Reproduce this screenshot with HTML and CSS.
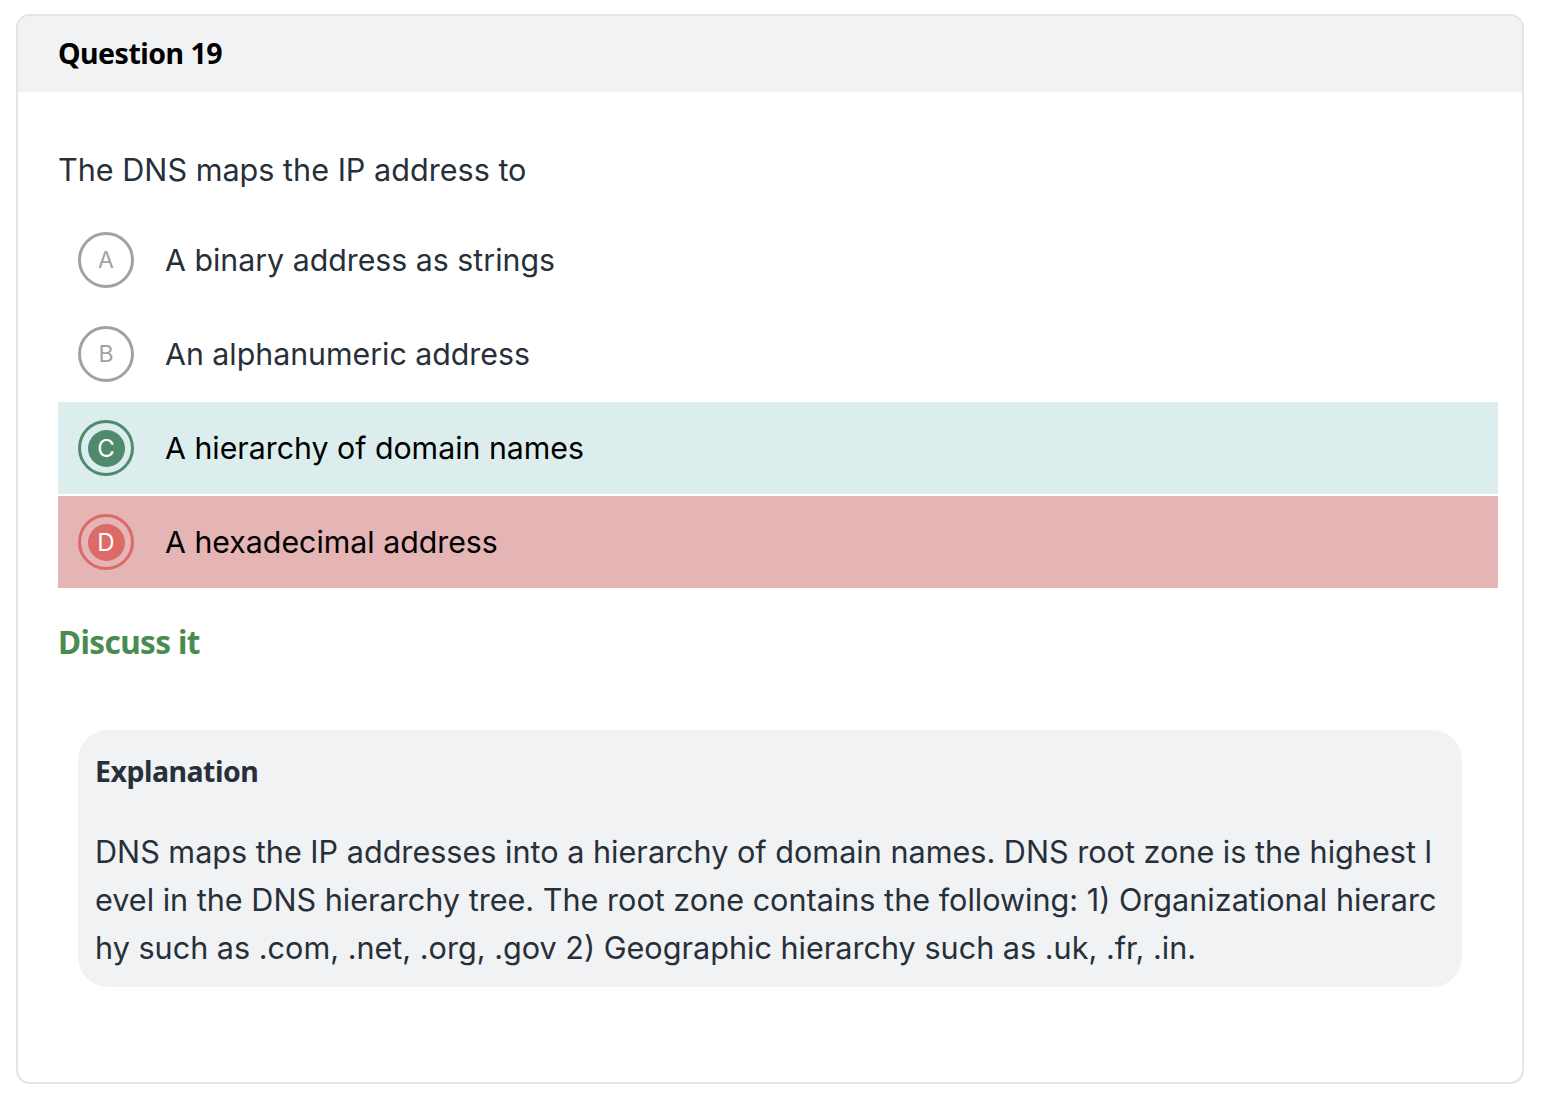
FILE: index.html
```html
<!DOCTYPE html>
<html lang="en">
<head>
<meta charset="utf-8">
<title>Question 19</title>
<link rel="stylesheet" href="styles.css">
</head>
<body>
<div class="card">
  <div class="card-header">Question 19</div>
  <div class="card-body">
    <p class="question">The DNS maps the IP address to</p>
    <ul class="options">
      <li class="option"><span class="badge">A</span><span class="opt-text">A binary address as strings</span></li>
      <li class="option"><span class="badge">B</span><span class="opt-text">An alphanumeric address</span></li>
      <li class="option correct"><span class="badge"><span class="dot">C</span></span><span class="opt-text">A hierarchy of domain names</span></li>
      <li class="option wrong"><span class="badge"><span class="dot">D</span></span><span class="opt-text">A hexadecimal address</span></li>
    </ul>
    <a class="discuss" href="#">Discuss it</a>
    <div class="explanation">
      <div class="exp-title">Explanation</div>
      <p class="exp-text">DNS maps the IP addresses into a hierarchy of domain names. DNS root zone is the highest level in the DNS hierarchy tree. The root zone contains the following: 1) Organizational hierarchy such as .com, .net, .org, .gov 2) Geographic hierarchy such as .uk, .fr, .in.</p>
    </div>
  </div>
</div>
</body>
</html>
```
FILE: styles.css
```css
* { box-sizing: border-box; }
body {
  margin: 0;
  padding: 14px 34px 0 16px;
  background: #fff;
  font-family: Inter, "Noto Sans", sans-serif;
  color: #27303a;
}
.card {
  border: 2px solid #e3e4e6;
  border-radius: 14px;
  overflow: hidden;
  height: 1070px;
}
.card-header {
  background: #f1f2f4;
  height: 76px;
  padding-left: 40px;
  padding-bottom: 3px;
  display: flex;
  align-items: center;
  font-family: "Noto Sans", sans-serif;
  font-weight: 700;
  font-size: 28.5px;
  letter-spacing: -0.5px;
  color: #000;
}
.card-body {
  padding: 58px 24px 0 40px;
}
.question {
  margin: 0 0 24px;
  font-size: 30.6px;
  line-height: 40px;
  color: #27303a;
}
.options {
  list-style: none;
  margin: 0;
  padding: 0;
}
.option {
  display: flex;
  align-items: center;
  height: 92px;
  margin-bottom: 2px;
  padding-left: 20px;
}
.badge {
  width: 56px;
  height: 56px;
  border-radius: 50%;
  border: 3px solid #a2a2a2;
  color: #a2a2a2;
  display: flex;
  align-items: center;
  justify-content: center;
  font-size: 23px;
  flex-shrink: 0;
}
.dot {
  width: 37px;
  height: 37px;
  border-radius: 50%;
  display: flex;
  align-items: center;
  justify-content: center;
  color: #fff;
  font-size: 24px;
}
.opt-text {
  margin-left: 31px;
  font-size: 30.3px;
  color: #27303a;
}
.correct { background: #dbeeed; }
.correct .badge { border-color: #4f8a6c; }
.correct .dot { background: #4f8a6c; }
.wrong { background: #e5b4b5; }
.wrong .badge { border-color: #dc6a66; }
.wrong .dot { background: #dc6a66; }
.correct .opt-text, .wrong .opt-text { color: #000; }
.discuss {
  display: inline-block;
  margin-top: 30px;
  font-family: "Noto Sans", sans-serif;
  font-weight: 700;
  font-size: 31.5px;
  letter-spacing: -0.6px;
  color: #4a8c4f;
  text-decoration: none;
}
.explanation {
  margin: 67px 36px 0 20px;
  background: #f1f2f4;
  border-radius: 30px;
  padding: 22px 17px 15px;
}
.exp-title {
  font-family: "Noto Sans", sans-serif;
  font-weight: 700;
  font-size: 28.5px;
  letter-spacing: -0.5px;
  color: #27303a;
}
.exp-text {
  margin: 38px 0 0;
  font-size: 30.6px;
  line-height: 48px;
  color: #27303a;
  word-break: break-all;
}
```
